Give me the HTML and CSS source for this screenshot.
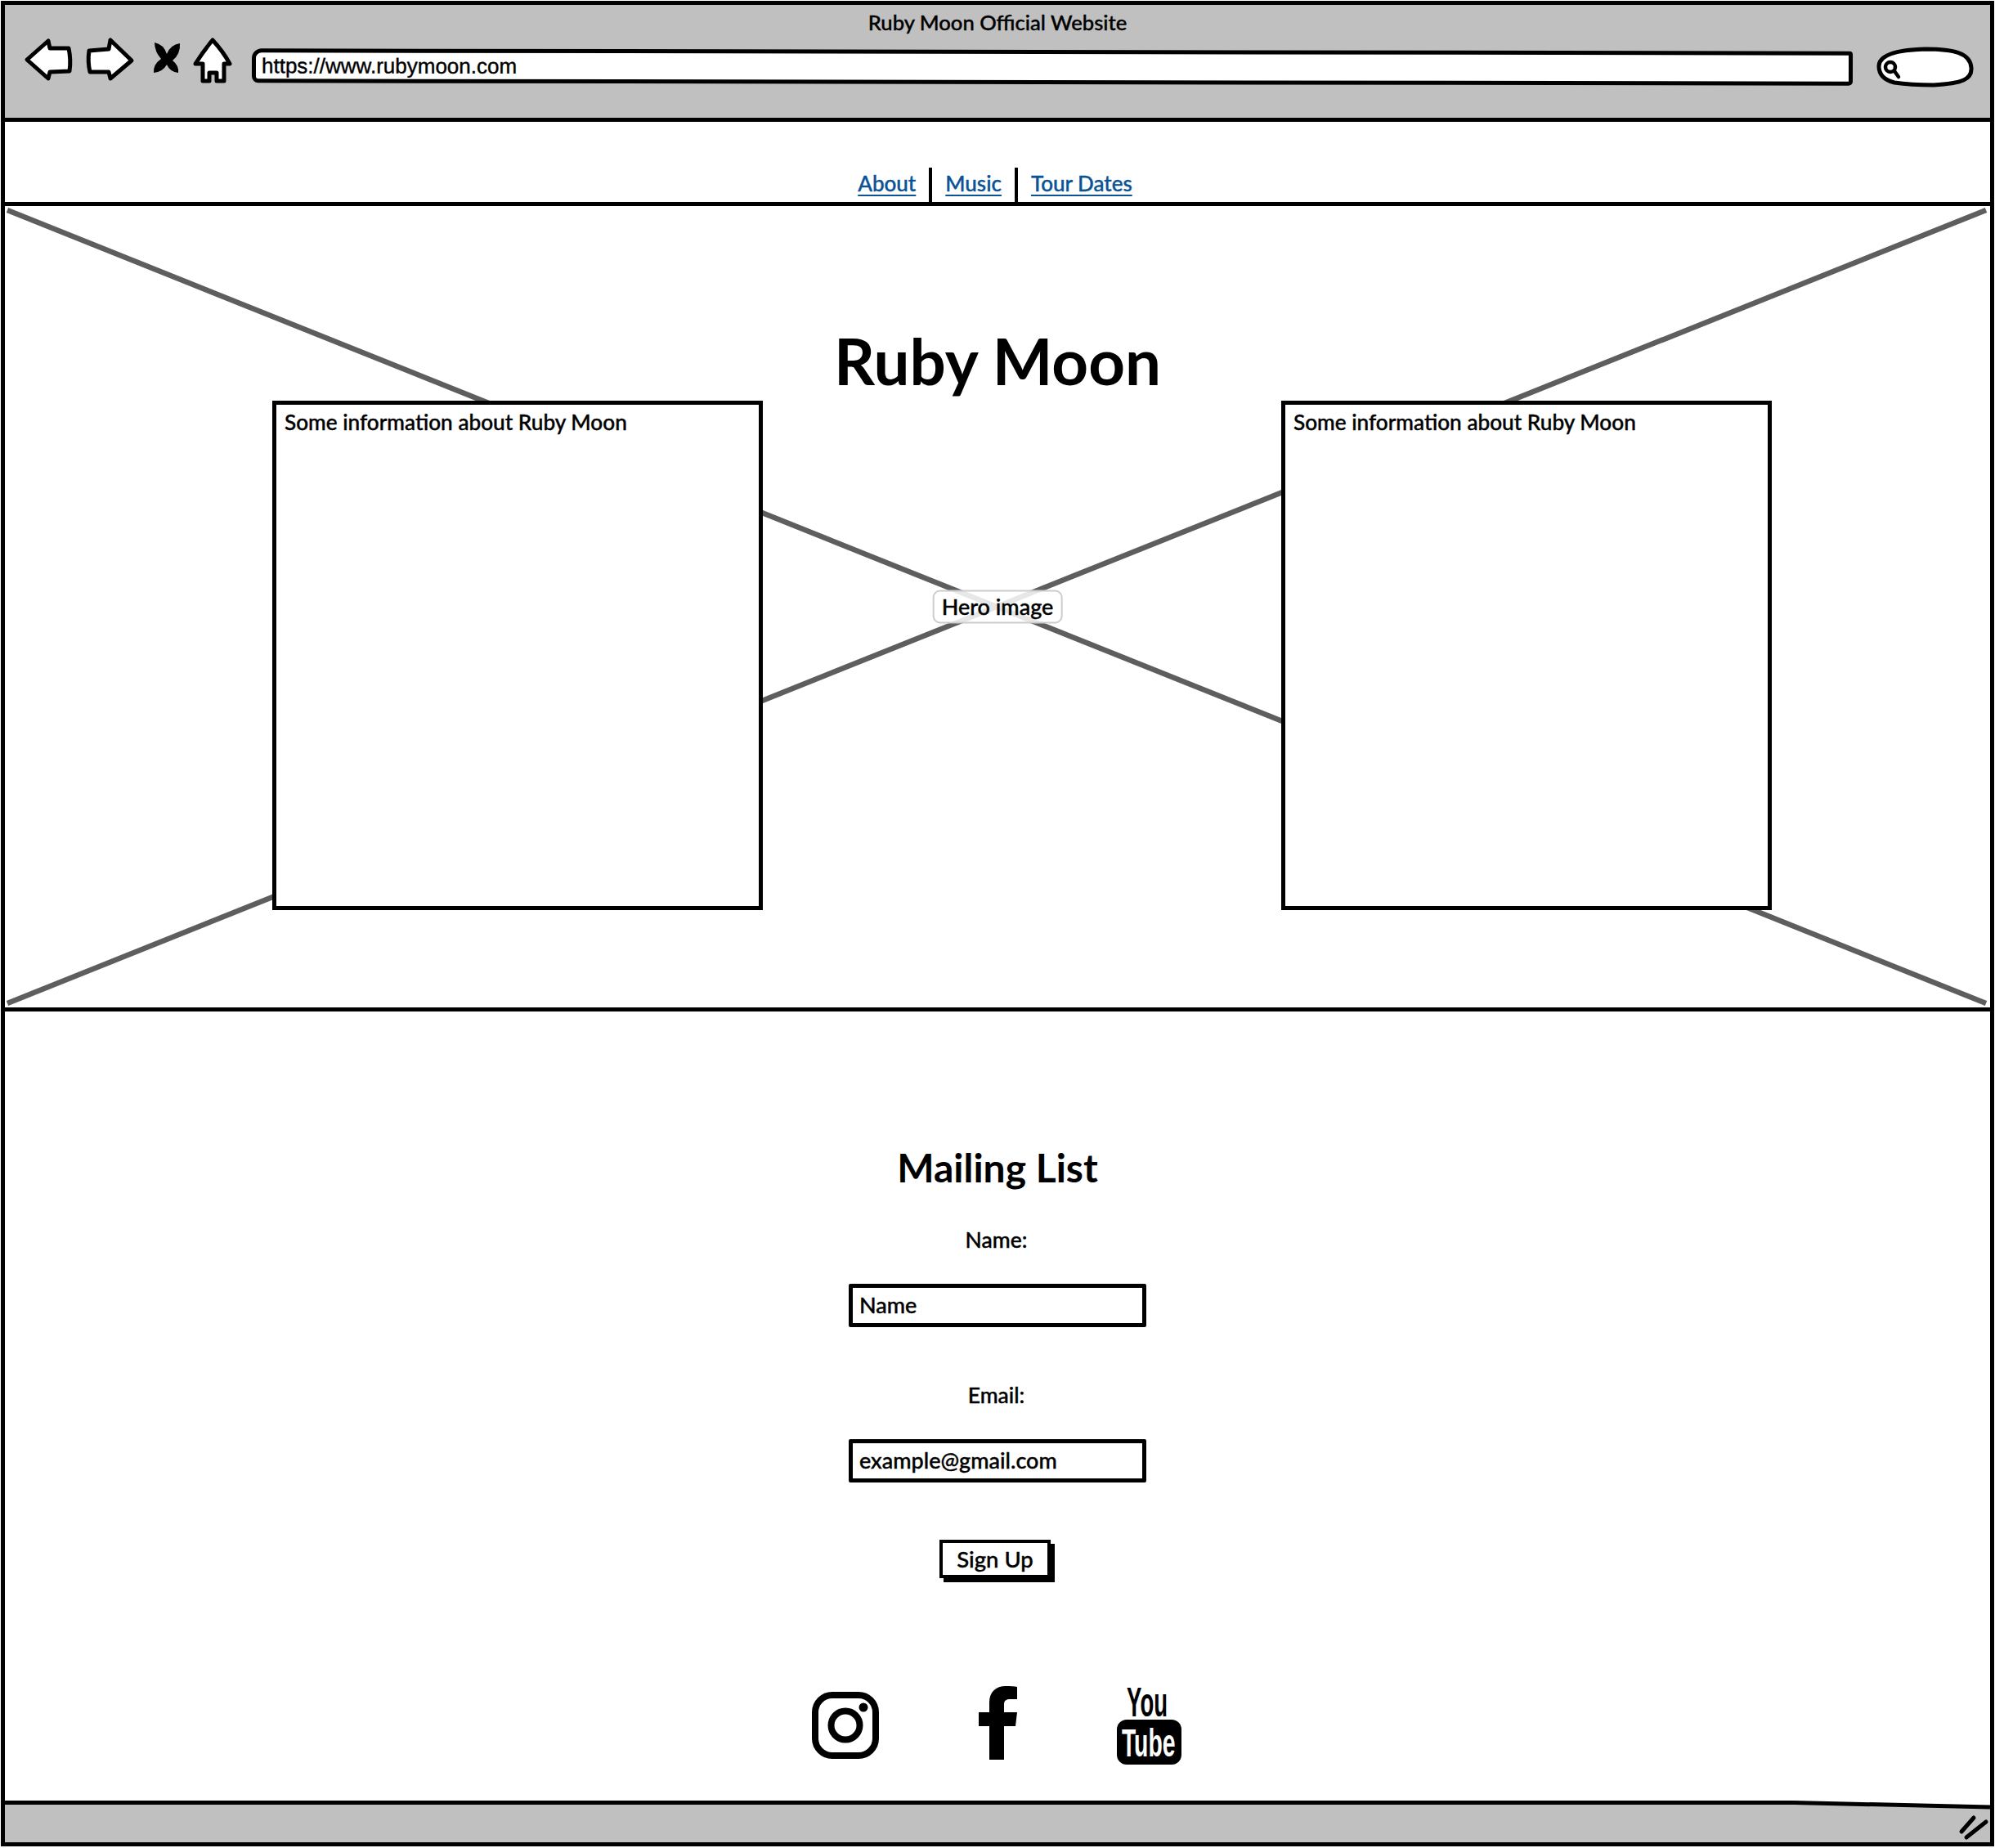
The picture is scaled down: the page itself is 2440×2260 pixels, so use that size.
FILE: index.html
```html
<!doctype html>
<html>
<head>
    <title>Ruby Moon Official Website</title>
    <meta charset="utf-8" />
    <link rel="stylesheet" href="styles.css">
</head>
<body>

<div class="window">

    <header class="toolbar">
        <div class="page-title">Ruby Moon Official Website</div>
        <div class="address-row">
            <svg class="browser-buttons" viewBox="28 45 257 58" width="257" height="58">
                <path class="btn" d="M33 73 L59 50 L61 59 L84 59 Q87 73 85 87 L61 88 L59 96 Z"/>
                <path class="btn" d="M161 74 L135 49 L133 60 L109 62 Q107 75 110 88 L133 88 L135 96 Z"/>
                <path d="M189 52 Q200 54 204 66 Q208 55 220 53 Q221 66 211 74 Q219 80 218 89 Q208 88 204 79 Q199 88 188 89 Q187 79 197 72 Q189 63 189 52 Z"/>
                <path class="btn" d="M260 49 Q273 63 281 78 L274 78 L274 99 L265 99 L265 89 L256 89 L256 99 L248 99 L248 78 L239 78 Q249 62 260 49 Z"/>
            </svg>
            <div class="url-bar">https://www.rubymoon.com</div>
            <svg class="search-box" viewBox="0 0 119 50" width="119" height="50">
                <path class="btn" d="M3 24 C3 10 25 4 60 3 C95 3 115 8 116 26 C117 40 105 45 70 47 C50 47 35 46 22 44 C10 41 3 34 3 24 Z"/>
                <circle class="glass" cx="17" cy="25" r="6"/>
                <line class="glass" x1="22" y1="30" x2="27" y2="37"/>
            </svg>
        </div>
    </header>

    <nav class="site-nav">
        <a href="#about">About</a>
        <a href="#music">Music</a>
        <a href="#tour">Tour Dates</a>
    </nav>

    <section class="hero">
        <svg class="hero-cross" viewBox="0 0 2428 982" width="2428" height="982">
            <line x1="3" y1="6" x2="2423" y2="976"/>
            <line x1="3" y1="976" x2="2423" y2="6"/>
        </svg>
        <span class="hero-label">Hero image</span>
        <h1>Ruby Moon</h1>
        <div class="info-row">
            <div class="info-card">Some information about Ruby Moon</div>
            <div class="info-card">Some information about Ruby Moon</div>
        </div>
    </section>

    <section class="mailing">
        <h2>Mailing List</h2>
        <form class="signup">
            <label for="name">Name:</label>
            <input id="name" type="text" placeholder="Name">
            <label for="email">Email:</label>
            <input id="email" type="text" placeholder="example@gmail.com">
            <button type="submit">Sign Up</button>
        </form>
        <div class="socials">
            <svg viewBox="0 0 82 82" width="82" height="82">
                <rect class="ig" x="4" y="4" width="74" height="74" rx="21"/>
                <circle class="ig" cx="41" cy="41" r="17.5"/>
                <circle cx="63" cy="19" r="5.5"/>
            </svg>
            <svg viewBox="0 0 47 96" width="47" height="96">
                <path d="M31 90 H13 V49 H0 V32 H13 V20 C13 7 21 0 33 0 C39 0 44 0 47 1 V16 H38 C33 16 31 18 31 23 V32 H47 L45 49 H31 Z"/>
            </svg>
            <svg class="yt-logo" viewBox="0 -10 79 106" width="79" height="106">
                <text class="yt" transform="scale(.55 1)" x="22" y="37" font-size="50">You</text>
                <rect x="0" y="41" width="79" height="55" rx="12"/>
                <text class="yt yt-white" transform="scale(.59 1)" x="10" y="86" font-size="48">Tube</text>
            </svg>
        </div>
    </section>

    <footer class="status-bar">
        <svg class="status-edge" viewBox="0 0 240 50" width="240" height="50">
            <polygon class="edge-fill" points="0,0 240,0 240,7 0,2"/>
            <line class="edge-line" x1="0" y1="2.5" x2="240" y2="8"/>
            <line class="grip" x1="205" y1="38" x2="220" y2="21"/>
            <line class="grip" x1="211" y1="45" x2="235" y2="26"/>
        </svg>
    </footer>

</div>

</body>
</html>
```

FILE: styles.css
```css
*{
    box-sizing: border-box;
}

body{
    margin: 0;
    padding: 1px 0 0 1px;
    background: #fff;
    color: #000;
    font-family: "Lato", "Noto Sans", sans-serif;
    font-weight: 500;
    font-size: 26px;
    -webkit-text-stroke: .4px;
}

.window{
    width: 2438px;
    height: 2257px;
    border: 5px solid #000;
    display: flex;
    flex-direction: column;
}

/* browser chrome */

.toolbar{
    height: 143px;
    flex: none;
    background: #c0c0c0;
    border-bottom: 5px solid #000;
    padding-top: 3px;
}

.page-title{
    height: 36px;
    line-height: 36px;
    text-align: center;
    font-size: 25.6px;
}

.address-row{
    display: flex;
    align-items: flex-start;
    padding-left: 22px;
}

.browser-buttons{
    flex: none;
}

.btn{
    fill: #fff;
    stroke: #000;
    stroke-width: 5;
    stroke-linejoin: round;
}

.url-bar{
    width: 1958px;
    height: 42px;
    margin: 16px 0 0 23px;
    padding-left: 7px;
    background: #fff;
    border: 5px solid #000;
    border-radius: 12px 4px 5px 8px;
    font-family: "Liberation Sans", sans-serif;
    line-height: 32px;
    transform: rotate(.1deg);
}

.search-box{
    flex: none;
    margin: 12px 0 0 29px;
}

.glass{
    fill: none;
    stroke: #000;
    stroke-width: 4.5;
    stroke-linecap: round;
}

/* site nav */

.site-nav{
    height: 98px;
    flex: none;
    display: flex;
    justify-content: center;
    align-items: flex-end;
    padding-right: 6px;
}

.site-nav a{
    color: #0b5394;
    height: 42px;
    line-height: 38px;
    padding: 0 16px;
    text-underline-offset: 4px;
}

.site-nav a + a{
    border-left: 4px solid #000;
}

/* hero */

.hero{
    position: relative;
    height: 990px;
    flex: none;
    margin: 0 -5px;
    padding-top: 141px;
    border-top: 5px solid #000;
    border-bottom: 5px solid #000;
}

.hero-cross{
    position: absolute;
    left: 5px;
    top: -1px;
}

.hero-cross line{
    stroke: #5e5e5e;
    stroke-width: 6.5;
}

.hero-label{
    position: absolute;
    left: 50%;
    top: 50%;
    transform: translate(-50%, -50%);
    padding: 0 9px;
    height: 41px;
    line-height: 35px;
    font-size: 27px;
    background: rgba(255,255,255,.85);
    border: 2px solid #ccc;
    border-radius: 9px;
    white-space: nowrap;
}

.hero h1{
    position: relative;
    margin: 0;
    height: 97px;
    line-height: 96px;
    text-align: center;
    font-size: 78px;
    font-weight: 700;
    -webkit-text-stroke: 0;
}

.info-row{
    position: relative;
    display: flex;
    justify-content: space-between;
    padding: 0 272px 0 332px;
}

.info-card{
    width: 600px;
    height: 623px;
    padding: 3px 10px;
    background: #fff;
    border: 5px solid #000;
    line-height: 36px;
    font-size: 26.2px;
}

/* mailing list */

.mailing{
    flex: 1;
    padding-top: 163px;
    display: flex;
    flex-direction: column;
    align-items: center;
}

.mailing h2{
    margin: 0;
    height: 56px;
    line-height: 56px;
    font-size: 48px;
    font-weight: 700;
    -webkit-text-stroke: 0;
}

.signup{
    display: flex;
    flex-direction: column;
    align-items: center;
}

.signup label{
    height: 36px;
    line-height: 36px;
    margin-top: 42px;
    margin-right: 3px;
    font-size: 26.5px;
}

.signup label + input + label{
    margin-top: 65px;
}

.signup input{
    width: 364px;
    height: 53px;
    margin-top: 36px;
    padding: 0 8px 2px;
    border: 5px solid #000;
    border-radius: 2px;
    font-family: inherit;
    font-weight: 500;
    font-size: 27px;
    color: #000;
    outline: none;
}

.signup input::placeholder{
    color: #000;
    opacity: 1;
}

.signup button{
    width: 136px;
    height: 47px;
    margin: 70px 6px 0 0;
    padding: 0;
    background: #fff;
    border: 4px solid #000;
    border-radius: 0;
    box-shadow: 5px 5px 0 #000;
    font-family: inherit;
    font-weight: 500;
    font-size: 27.5px;
    color: #000;
}

.socials{
    display: flex;
    align-items: center;
    gap: 122px;
    margin: 132px 3px 0 0;
}

.yt-logo{
    margin-top: -10px;
}

.yt{
    font-family: "Liberation Sans", sans-serif;
    font-weight: 700;
    -webkit-text-stroke: 0;
}

.yt-white{
    fill: #fff;
}

.ig{
    fill: none;
    stroke: #000;
    stroke-width: 8;
}

/* status bar */

.status-bar{
    position: relative;
    height: 51px;
    flex: none;
    background: #c0c0c0;
    border-top: 5px solid #000;
}

.status-edge{
    position: absolute;
    right: 0;
    top: -5px;
}

.edge-fill{
    fill: #fff;
}

.edge-line{
    stroke: #000;
    stroke-width: 5;
}

.grip{
    stroke: #000;
    stroke-width: 5;
    stroke-linecap: round;
}
```
